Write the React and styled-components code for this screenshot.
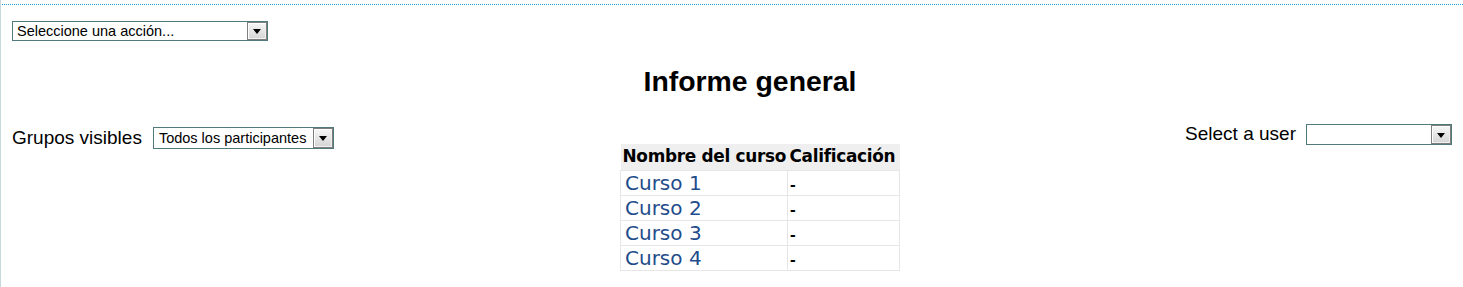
import React from "react";
import styled, { createGlobalStyle } from "styled-components";

const Global = createGlobalStyle`
  html, body { margin: 0; padding: 0; background: #fff; }
  body { font-family: "Liberation Sans", Arial, sans-serif; color: #000; }
`;

const Page = styled.div`
  min-height: 287px;
  border-left: 1px solid #c6d8dc;
  box-sizing: border-box;
  padding: 4px 11px 0 10px;
`;

const TopRule = styled.div`
  border-top: 1px dotted #1a9fd0;
  margin: 0 -11px 0 -9px;
`;

const ActionBar = styled.div`
  margin-top: 16px;
  padding-left: 1px;
  display: flex;
`;

const SelectBox = styled.div`
  box-sizing: border-box;
  width: ${(p) => p.$w}px;
  height: ${(p) => p.$h}px;
  border: 1px solid #52797c;
  background: #fff;
  display: flex;
  align-items: stretch;
  flex: none;
`;

const SelectText = styled.span`
  flex: 1;
  font-size: 14.5px;
  line-height: ${(p) => p.$h - 2}px;
  padding-left: ${(p) => p.$pad}px;
  white-space: nowrap;
  overflow: hidden;
  color: #000;
`;

const ArrowButton = styled.span`
  box-sizing: border-box;
  width: 20px;
  border: 1px solid #7e7e7e;
  box-shadow: inset 1px 1px 0 #fff, inset -1px -1px 0 #f0f0f0;
  background: linear-gradient(#f7f7f7, #d4d4d4);
  display: flex;
  align-items: center;
  justify-content: center;
  &::after {
    content: "";
    width: 0;
    height: 0;
    border-left: 4.5px solid transparent;
    border-right: 4.5px solid transparent;
    border-top: 5px solid #000;
    margin-top: 1px;
  }
`;

const Select = ({ w, h, pad = 4, children }) => (
  <SelectBox $w={w} $h={h}>
    <SelectText $h={h} $pad={pad}>{children}</SelectText>
    <ArrowButton />
  </SelectBox>
);

const Heading = styled.h2`
  margin: 24px 0 0;
  padding-left: 37px;
  text-align: center;
  font-size: 28.4px;
  font-weight: bold;
  line-height: 33px;
`;

const Row = styled.div`
  display: grid;
  grid-template-columns: 609px auto 1fr;
  align-items: start;
  margin-top: 25px;
`;

const Group = styled.div`
  display: flex;
  align-items: flex-start;
  gap: ${(p) => p.$gap}px;
  justify-content: ${(p) => (p.$end ? "flex-end" : "flex-start")};
  margin-top: ${(p) => p.$top}px;
  padding-left: ${(p) => p.$indent || 0}px;
`;

const Label = styled.span`
  font-size: 19px;
  line-height: 22px;
  white-space: nowrap;
  margin-top: ${(p) => p.$top || 0}px;
`;

const SelectWrap = styled.div`
  margin-top: ${(p) => p.$top}px;
`;

const Table = styled.table`
  margin-top: 21px;
  border-collapse: collapse;
  table-layout: fixed;
  width: 279px;
  font-family: "DejaVu Sans", Verdana, sans-serif;
`;

const Th = styled.th`
  background: #efefef;
  font-size: 16.9px;
  font-weight: bold;
  text-align: left;
  white-space: nowrap;
  height: 26px;
  padding: 0 0 1px 2px;
  box-sizing: border-box;
  vertical-align: middle;
  width: ${(p) => p.$w}px;
  letter-spacing: -0.3px;
`;

const Td = styled.td`
  border: 1px solid #e6e6e6;
  padding: 2px 0 2px ${(p) => p.$pad}px;
  height: 20px;
  font-size: 20px;
  line-height: 20px;
  vertical-align: top;
`;

const CourseLink = styled.a`
  color: #1f4c8b;
  text-decoration: none;
`;

const Grade = styled.span`
  font-family: "Liberation Sans", Arial, sans-serif;
  font-weight: bold;
  font-size: 17px;
  line-height: 0;
`;

const courses = ["Curso 1", "Curso 2", "Curso 3", "Curso 4"];

export default function App() {
  return (
    <>
      <Global />
      <Page>
        <TopRule />
        <ActionBar>
          <Select w={256} h={20}>Seleccione una acción...</Select>
        </ActionBar>
        <Heading>Informe general</Heading>
        <Row>
          <Group $gap={11} $top={2} $indent={1}>
            <Label $top={2}>Grupos visibles</Label>
            <SelectWrap $top={2}>
              <Select w={181} h={22} pad={5}>Todos los participantes</Select>
            </SelectWrap>
          </Group>
          <Table>
            <thead>
              <tr>
                <Th $w={167}>Nombre del curso</Th>
                <Th $w={112}>Calificación</Th>
              </tr>
            </thead>
            <tbody>
              {courses.map((c) => (
                <tr key={c}>
                  <Td $pad={4}>
                    <CourseLink href="#">{c}</CourseLink>
                  </Td>
                  <Td $pad={2}>
                    <Grade>-</Grade>
                  </Td>
                </tr>
              ))}
            </tbody>
          </Table>
          <Group $gap={10} $top={0} $end>
            <Label>Select a user</Label>
            <SelectWrap $top={1}>
              <Select w={146} h={21} />
            </SelectWrap>
          </Group>
        </Row>
      </Page>
    </>
  );
}
